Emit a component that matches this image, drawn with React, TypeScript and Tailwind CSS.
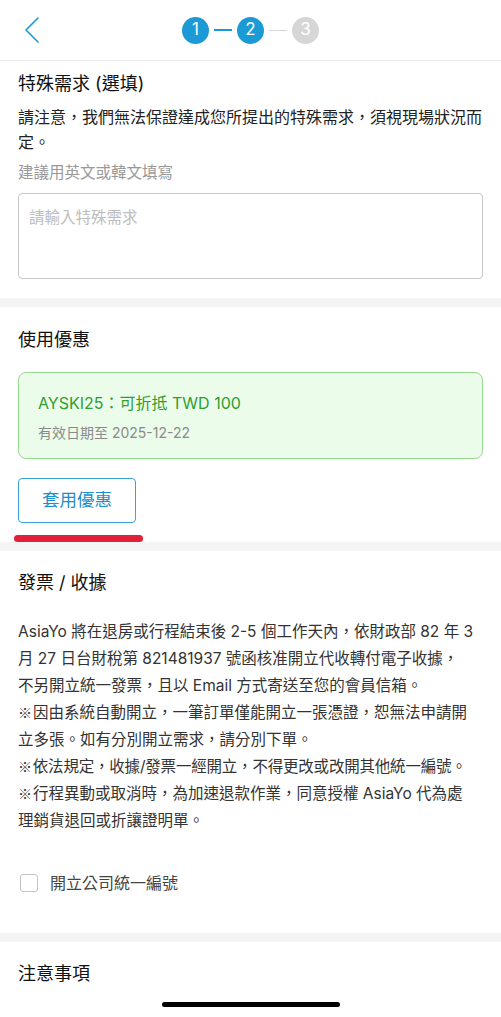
import React from "react";

const font = "font-['Inter','Noto_Sans_CJK_TC',sans-serif]";

function Step({ n, active }: { n: number; active: boolean }) {
  return (
    <div
      className={`flex h-[27px] w-[27px] items-center justify-center rounded-full text-[17px] text-white ${
        active ? "bg-[#1b9ad6]" : "bg-[#d6d6d6]"
      }`}
    >
      {n}
    </div>
  );
}

function Band() {
  return <div className="h-[9px] bg-[#f4f4f4]" />;
}

function Mark() {
  return <span className="mr-[1px] font-['Noto_Sans_CJK_TC',sans-serif] text-[14px]">※</span>;
}

export default function App() {
  return (
    <div className={`relative h-[1017px] w-[501px] overflow-hidden bg-white text-[#222] ${font}`}>
      {/* Header */}
      <div className="relative flex h-[61px] items-center justify-center border-b border-[#ececec]">
        <div className="absolute left-[24px] top-[16px]">
          <svg width="18" height="28" viewBox="0 0 18 28" fill="none">
            <path d="M14 2 L2 14 L14 26" stroke="#1b9ad6" strokeWidth="1.6" strokeLinecap="round" strokeLinejoin="round" />
          </svg>
        </div>
        <div className="flex items-center">
          <Step n={1} active />
          <div className="mx-[5px] h-[2px] w-[18px] bg-[#1b9ad6]" />
          <Step n={2} active />
          <div className="mx-[5px] h-[1px] w-[18px] bg-[#d6d6d6]" />
          <Step n={3} active={false} />
        </div>
      </div>

      {/* Special request */}
      <div className="px-[18px] pt-[10px] pb-[19px]">
        <div className="text-[18px] leading-[26px] text-[#111]">特殊需求 (選填)</div>
        <div className="mt-[8px] text-[16px] leading-[25px] text-[#222]">
          請注意，我們無法保證達成您所提出的特殊需求，須視現場狀況而定。
        </div>
        <div className="mt-[5px] text-[15.5px] leading-[25px] text-[#999]">建議用英文或韓文填寫</div>
        <div className="mt-[8px] h-[86px] rounded-[4px] border border-[#c8c8c8] px-[10px] pt-[12px] text-[15.5px] leading-[24px] text-[#bdbdbd]">
          請輸入特殊需求
        </div>
      </div>

      <Band />

      {/* Coupon */}
      <div className="px-[18px] pt-[20px]">
        <div className="text-[18px] leading-[26px] text-[#111]">使用優惠</div>
        <div className="mt-[19px] h-[87px] rounded-[8px] border border-[#95d98f] bg-[#ebfcea] px-[19px] pt-[18px]">
          <div className="text-[16px] leading-[24px] text-[#2f9e2f]">AYSKI25：可折抵 TWD 100</div>
          <div className="mt-[8px] text-[14px] leading-[20px] text-[#8a8a8a]">有效日期至 2025-12-22</div>
        </div>
        <div className="mt-[19px] flex h-[45px] w-[118px] items-center justify-center rounded-[4px] border border-[#3ba3d6] text-[17.5px] text-[#1b8fcc]">
          套用優惠
        </div>
        <div className="ml-[-4px] mt-[12px] h-[7px] w-[129px] rounded-full bg-[#e2203a]" />
      </div>

      <Band />

      {/* Invoice */}
      <div className="px-[18px] pt-[19px] pb-[39px]">
        <div className="text-[18px] leading-[26px] text-[#111]">發票 / 收據</div>
        <div className="mt-[22px] text-[15.5px] leading-[27px] text-[#333]">
          <div className="whitespace-nowrap">AsiaYo 將在退房或行程結束後 2-5 個工作天內，依財政部 82 年 3</div>
          <div className="whitespace-nowrap">月 27 日台財稅第 821481937 號函核准開立代收轉付電子收據，</div>
          <div className="whitespace-nowrap">不另開立統一發票，且以 Email 方式寄送至您的會員信箱。</div>
          <div className="whitespace-nowrap">
            <Mark />因由系統自動開立，一筆訂單僅能開立一張憑證，恕無法申請開
          </div>
          <div className="whitespace-nowrap">立多張。如有分別開立需求，請分別下單。</div>
          <div className="whitespace-nowrap tracking-[-0.2px]">
            <Mark />依法規定，收據/發票一經開立，不得更改或改開其他統一編號。
          </div>
          <div className="whitespace-nowrap">
            <Mark />行程異動或取消時，為加速退款作業，同意授權 AsiaYo 代為處
          </div>
          <div className="whitespace-nowrap">理銷貨退回或折讓證明單。</div>
        </div>
        <div className="mt-[38px] flex items-center">
          <div className="ml-[2px] h-[18px] w-[18px] rounded-[3px] border border-[#c4c4c4]" />
          <div className="ml-[12px] text-[16px] leading-[22px] text-[#444]">開立公司統一編號</div>
        </div>
      </div>

      <Band />

      <div className="px-[18px] pt-[19px]">
        <div className="text-[18px] leading-[26px] text-[#111]">注意事項</div>
      </div>

      {/* Home indicator */}
      <div className="absolute bottom-[10px] left-[162px] h-[5px] w-[178px] rounded-full bg-black" />
    </div>
  );
}
